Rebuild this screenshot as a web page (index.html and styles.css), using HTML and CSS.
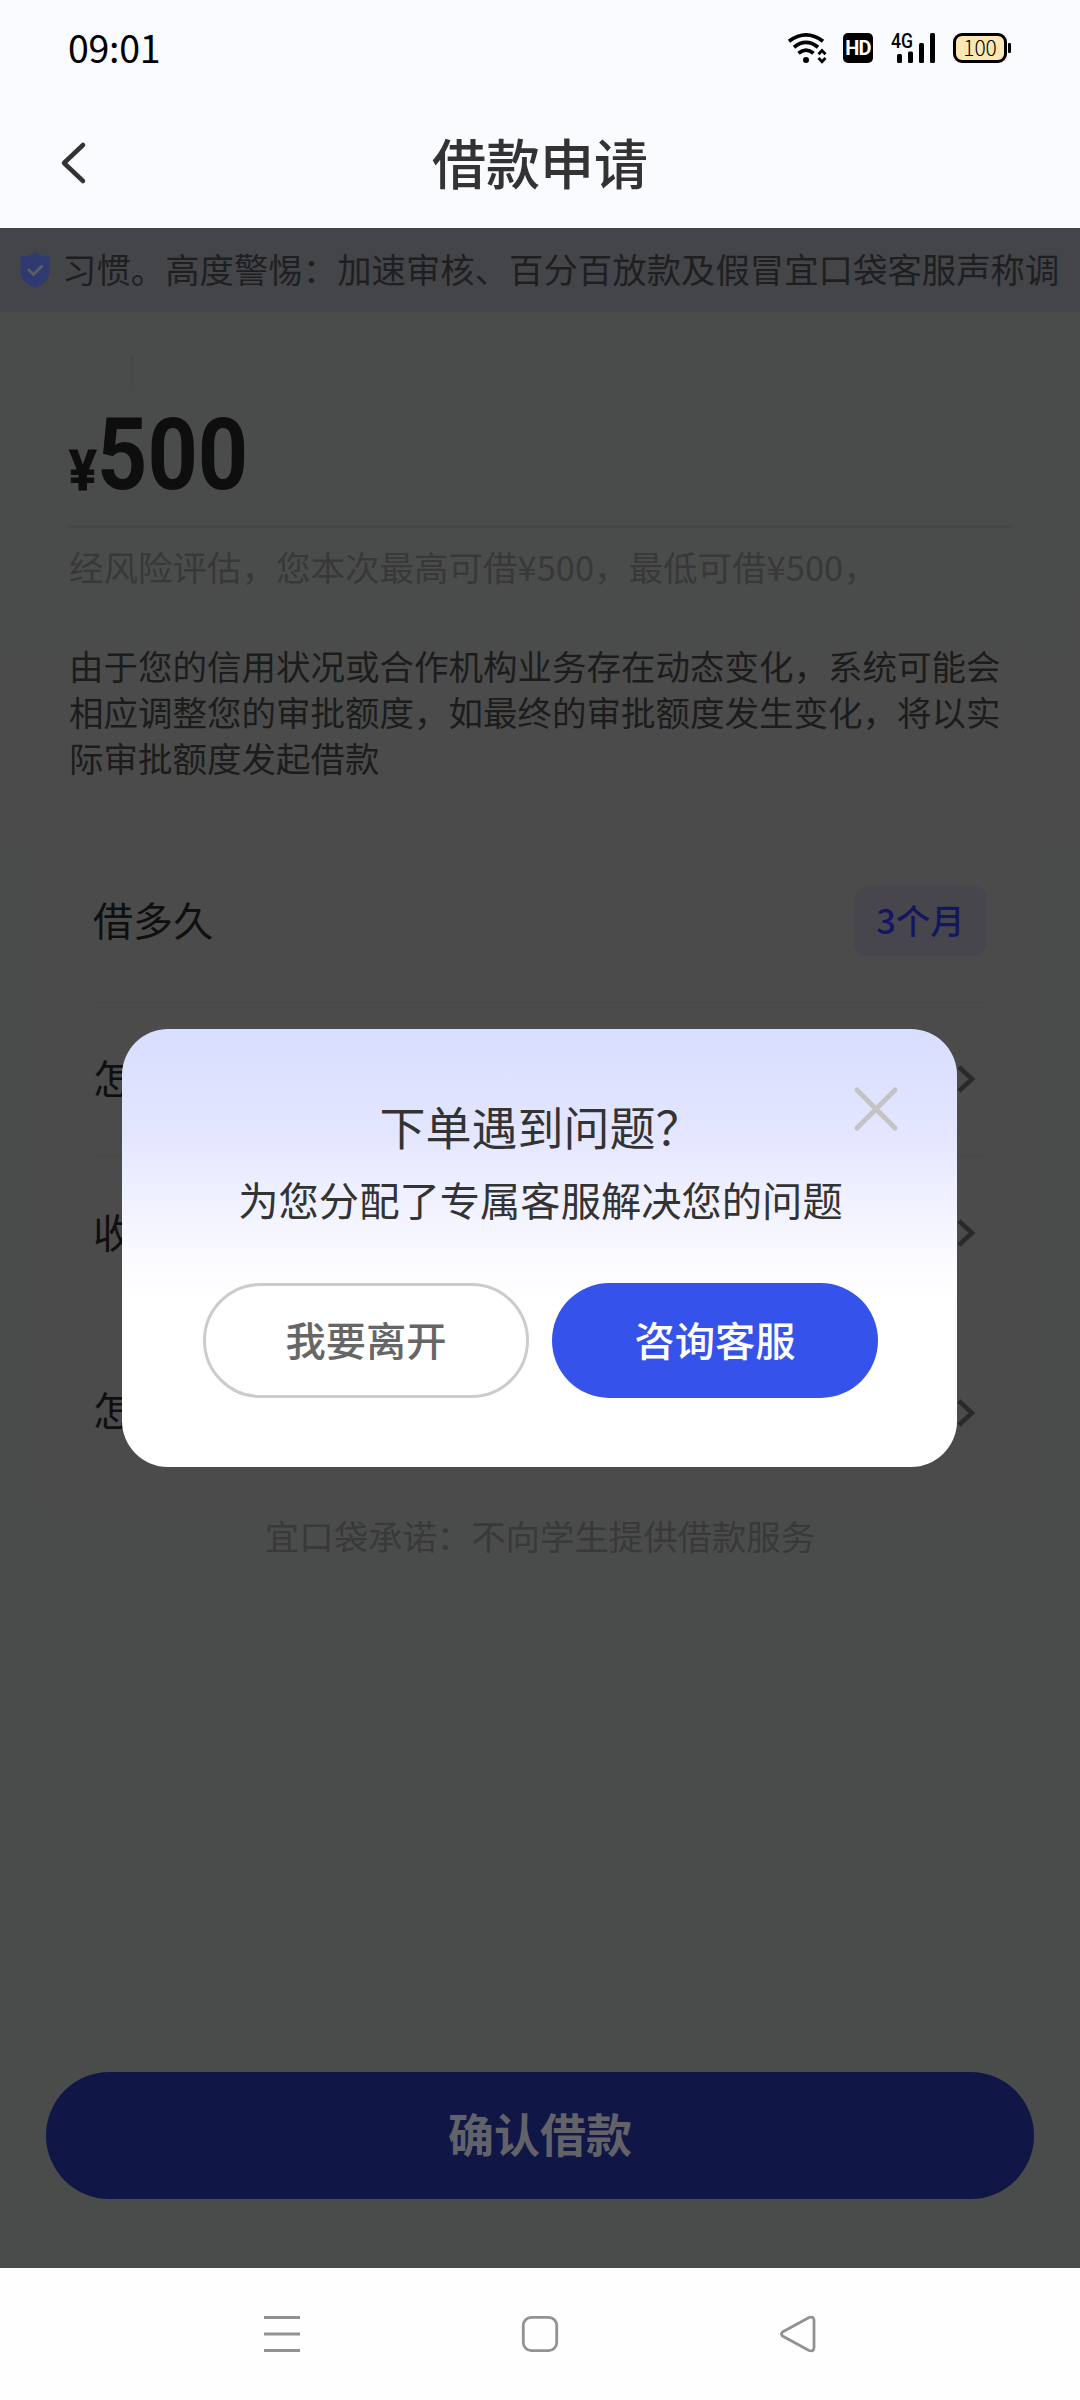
FILE: index.html
```html
<!DOCTYPE html>
<html lang="zh-CN">
<head>
<meta charset="utf-8">
<title>借款申请</title>
<link rel="stylesheet" href="styles.css">
</head>
<body>
<div class="screen">
  <header class="status">
    <span class="clock">09:01</span>
    <div class="status-icons">
      <svg class="wifi" width="40" height="32" viewBox="0 0 40 32" fill="none" stroke="#000" stroke-width="3.8">
        <path d="M2 9.300Q19 -3.500 36 9.300"/><path d="M7 15.300Q19 5.500 31 15.300"/><path d="M11.500 21.300Q19 15 26.500 21.300"/>
        <circle cx="19" cy="28" r="3" fill="#000" stroke="none"/>
        <path d="M31.500 22.300L35 18.500L38.500 22.300M31.500 26L35 29.800L38.500 26" stroke-width="2.800"/>
      </svg>
      <span class="hd">HD</span>
      <div class="signal">
        <span class="net">4G</span>
        <svg width="39" height="30" viewBox="0 0 39 30"><rect x="0" y="21" width="5" height="9" rx="1.500"/><rect x="11" y="18.500" width="5" height="11.500" rx="1.500"/><rect x="22" y="10" width="5" height="20" rx="1.500"/><rect x="33" y="0" width="5" height="30" rx="1.500"/></svg>
      </div>
      <div class="battery"><span class="level">100</span><i class="nub"></i></div>
    </div>
  </header>
  <nav class="titlebar">
    <svg class="back" width="28" height="46" viewBox="0 0 28 46" fill="none" stroke="#333" stroke-width="4.500" stroke-linecap="round" stroke-linejoin="round"><path d="M24 5L5 23L24 41"/></svg>
    <h1>借款申请</h1>
  </nav>
  <main class="page">
    <div class="notice">
      <svg width="30" height="36" viewBox="0 0 30 36"><path d="M15 0.500C19 3.500 24 4.500 29.500 4.500V18C29.500 27 24 32.500 15 35.500C6 32.500 0.500 27 0.500 18V4.500C6 4.500 11 3.500 15 0.500Z" fill="#303a70"/><path d="M8 17L13.500 22.500L22.500 13.500" fill="none" stroke="#595b66" stroke-width="3"/></svg>
      <p>习惯。高度警惕：加速审核、百分百放款及假冒宜口袋客服声称调</p>
    </div>
    <section class="loan">
      <i class="caret"></i>
      <div class="amount"><span class="yen">¥</span><span class="num">500</span></div>
      <p class="hint">经风险评估，您本次最高可借¥500，最低可借¥500，</p>
      <p class="tips">由于您的信用状况或合作机构业务存在动态变化，系统可能会相应调整您的审批额度，如最终的审批额度发生变化，将以实际审批额度发起借款</p>
    </section>
    <ul class="rows">
      <li class="row term"><span>借多久</span><b class="pill">3个月</b></li>
      <li class="row repay"><span>怎</span><svg class="chev" width="20" height="32" viewBox="0 0 20 32"><path d="M3 4L16 16L3 28"/></svg></li>
      <li class="row account"><span>收</span><svg class="chev" width="20" height="32" viewBox="0 0 20 32"><path d="M3 4L16 16L3 28"/></svg></li>
      <li class="row usage"><span>怎</span><svg class="chev" width="20" height="32" viewBox="0 0 20 32"><path d="M3 4L16 16L3 28"/></svg></li>
    </ul>
    <p class="promise">宜口袋承诺：不向学生提供借款服务</p>
    <button class="confirm">确认借款</button>
  </main>
  <footer class="sysnav">
    <svg width="36" height="38" viewBox="0 0 36 38"><path d="M0 2.500H36M0 19H36M0 35.500H36"/></svg>
    <svg width="38" height="38" viewBox="0 0 38 38"><rect x="2.300" y="2.300" width="33.400" height="33.400" rx="8"/></svg>
    <svg width="36" height="38" viewBox="0 0 36 38"><path d="M2.500 17Q0.500 19 2.500 21L29 35.500Q34 37 34 32.500V5.500Q34 1 29 2.500Z"/></svg>
  </footer>
  <div class="dialog" role="dialog">
    <svg class="close" width="46" height="46" viewBox="0 0 46 46"><path d="M4 4L42 42M42 4L4 42"/></svg>
    <h2>下单遇到问题？</h2>
    <p>为您分配了专属客服解决您的问题</p>
    <div class="actions">
      <button class="leave">我要离开</button>
      <button class="ask">咨询客服</button>
    </div>
  </div>
</div>
</body>
</html>
```
FILE: styles.css
```css
* { box-sizing: border-box; margin: 0; padding: 0; }
body { font-family: "Noto Sans CJK SC", sans-serif; background: #fefefe; }
button { border: 0; font-family: inherit; }
ul { list-style: none; }
i { display: block; }
.screen { position: relative; width: 1080px; height: 2400px; display: flex; flex-direction: column; overflow: hidden; }

.status { height: 96px; padding: 0 69px 0 68px; display: flex; justify-content: space-between; align-items: center; background: #fafbff; }
.clock { font-size: 37.500px; line-height: 48px; padding-bottom: 3px; color: #000; letter-spacing: -0.300px; }
.status-icons { display: flex; align-items: center; }
.wifi { margin-right: 16px; }
.hd { width: 30px; height: 30px; border-radius: 5px; background: #000; color: #fff; font: 700 20px/30px "Roboto", sans-serif; text-align: center; letter-spacing: -0.700px; margin-right: 18px; }
.signal { position: relative; width: 44px; height: 30px; padding-left: 6px; margin-right: 18px; }
.signal svg { display: block; }
.net { position: absolute; left: 0; top: -1px; font: 500 20px/18px "Roboto", sans-serif; transform: scaleX(.88); transform-origin: 0 0; }
.battery { position: relative; width: 54px; height: 30px; margin-right: 4px; border: 3px solid #000; border-radius: 9px; background: #fbe7b2; display: flex; justify-content: center; align-items: center; }
.level { font-size: 21px; font-weight: 300; line-height: 24px; padding-bottom: 2px; }
.nub { position: absolute; right: -7px; top: 7px; width: 3px; height: 10px; border-radius: 1px; background: #000; }

.titlebar { height: 132px; padding: 0 59px; display: grid; grid-template-columns: 28px 1fr 28px; align-items: center; background: #fafbff; }
.titlebar h1 { font-size: 54px; font-weight: 500; line-height: 70px; text-align: center; color: #333; }
.back { margin-top: 2px; }

.page { height: 2040px; display: flex; flex-direction: column; background: #4a4c4b; }
.notice { height: 84px; padding-left: 20px; display: flex; align-items: center; background: #444549; }
.notice p { margin: 0 0 4px 12px; font-size: 34.400px; line-height: 50px; white-space: nowrap; color: #1f1f22; }
.loan { height: 528px; padding: 43px 68px 0 69px; background: linear-gradient(#4a4c4b 50%, #4b4b4b 66%); }
.caret { width: 3px; height: 36px; margin-left: 62px; background: #474948; }
.amount { height: 137px; display: flex; align-items: flex-end; padding-bottom: 34px; border-bottom: 3px solid #454746; font-family: "Roboto", sans-serif; font-weight: 700; color: #0e0e0e; }
.yen { width: 28px; font-size: 56px; line-height: 40px; transform: scaleX(.92); transform-origin: 0 0; -webkit-text-stroke: 1px #0e0e0e; }
.num { font-size: 101px; line-height: 72px; transform: scaleX(.87); transform-origin: 0 0; }
.hint { margin-top: 13px; font-size: 34.500px; line-height: 50px; white-space: nowrap; color: #373837; }
.tips { margin-top: 51px; font-size: 34.500px; line-height: 46px; color: #1c1c1c; width: 940px; }

.rows { margin: 0 40px; padding: 0 53px; background: #4b4b4b; color: #0f0f0f; font-size: 40.100px; line-height: 56px; }
.row { display: flex; justify-content: space-between; align-items: center; }
.row span { padding-bottom: 4px; }
.term { height: 163px; border-bottom: 1px solid #474747; }
.repay { height: 153px; border-bottom: 1px solid #474747; }
.account { height: 154px; }
.usage { height: 206px; }
.usage span { padding-bottom: 8px; }
.pill { width: 133px; height: 70px; border-radius: 14px; background: #46464c; color: #14175f; font-size: 34.500px; font-weight: 500; line-height: 66px; text-align: center; }
.chev { margin-right: 11px; fill: none; stroke: #2a2a2a; stroke-width: 4.500; }
.promise { margin-top: -6px; font-size: 34.400px; line-height: 50px; text-align: center; color: #383938; }
.confirm { margin: auto 46px 69px; height: 127px; padding-bottom: 7px; border-radius: 64px; background: #101645; color: #626268; font-size: 46px; font-weight: 600; line-height: 60px; }

.sysnav { height: 132px; padding: 0 264px; display: flex; justify-content: space-between; align-items: center; background: #fefefe; }
.sysnav svg { fill: none; stroke: #929292; stroke-width: 2.800; }

.dialog { position: absolute; left: 122px; top: 1029px; width: 835px; height: 438px; border-radius: 46px; padding: 62px 79px 0 81px; background: linear-gradient(#d8deff 0, #e4e6ff 24%, #fbfbff 53%, #fff 62%); color: #333; text-align: center; }
.dialog h2 { font-size: 46px; font-weight: 400; line-height: 68px; }
.dialog p { font-size: 40.300px; line-height: 60px; margin-top: 10px; }
.close { position: absolute; right: 58px; top: 57px; fill: none; stroke: #c4c4c4; stroke-width: 5; stroke-linecap: round; }
.actions { display: flex; justify-content: space-between; margin-top: 54px; }
.actions button { height: 115px; width: 326px; padding-bottom: 4px; border-radius: 58px; font-size: 40.300px; font-weight: 500; line-height: 56px; }
.leave { background: #fff; border: 3px solid #ccc; color: #666; }
.ask { background: #3552ea; color: #fff; }
```
